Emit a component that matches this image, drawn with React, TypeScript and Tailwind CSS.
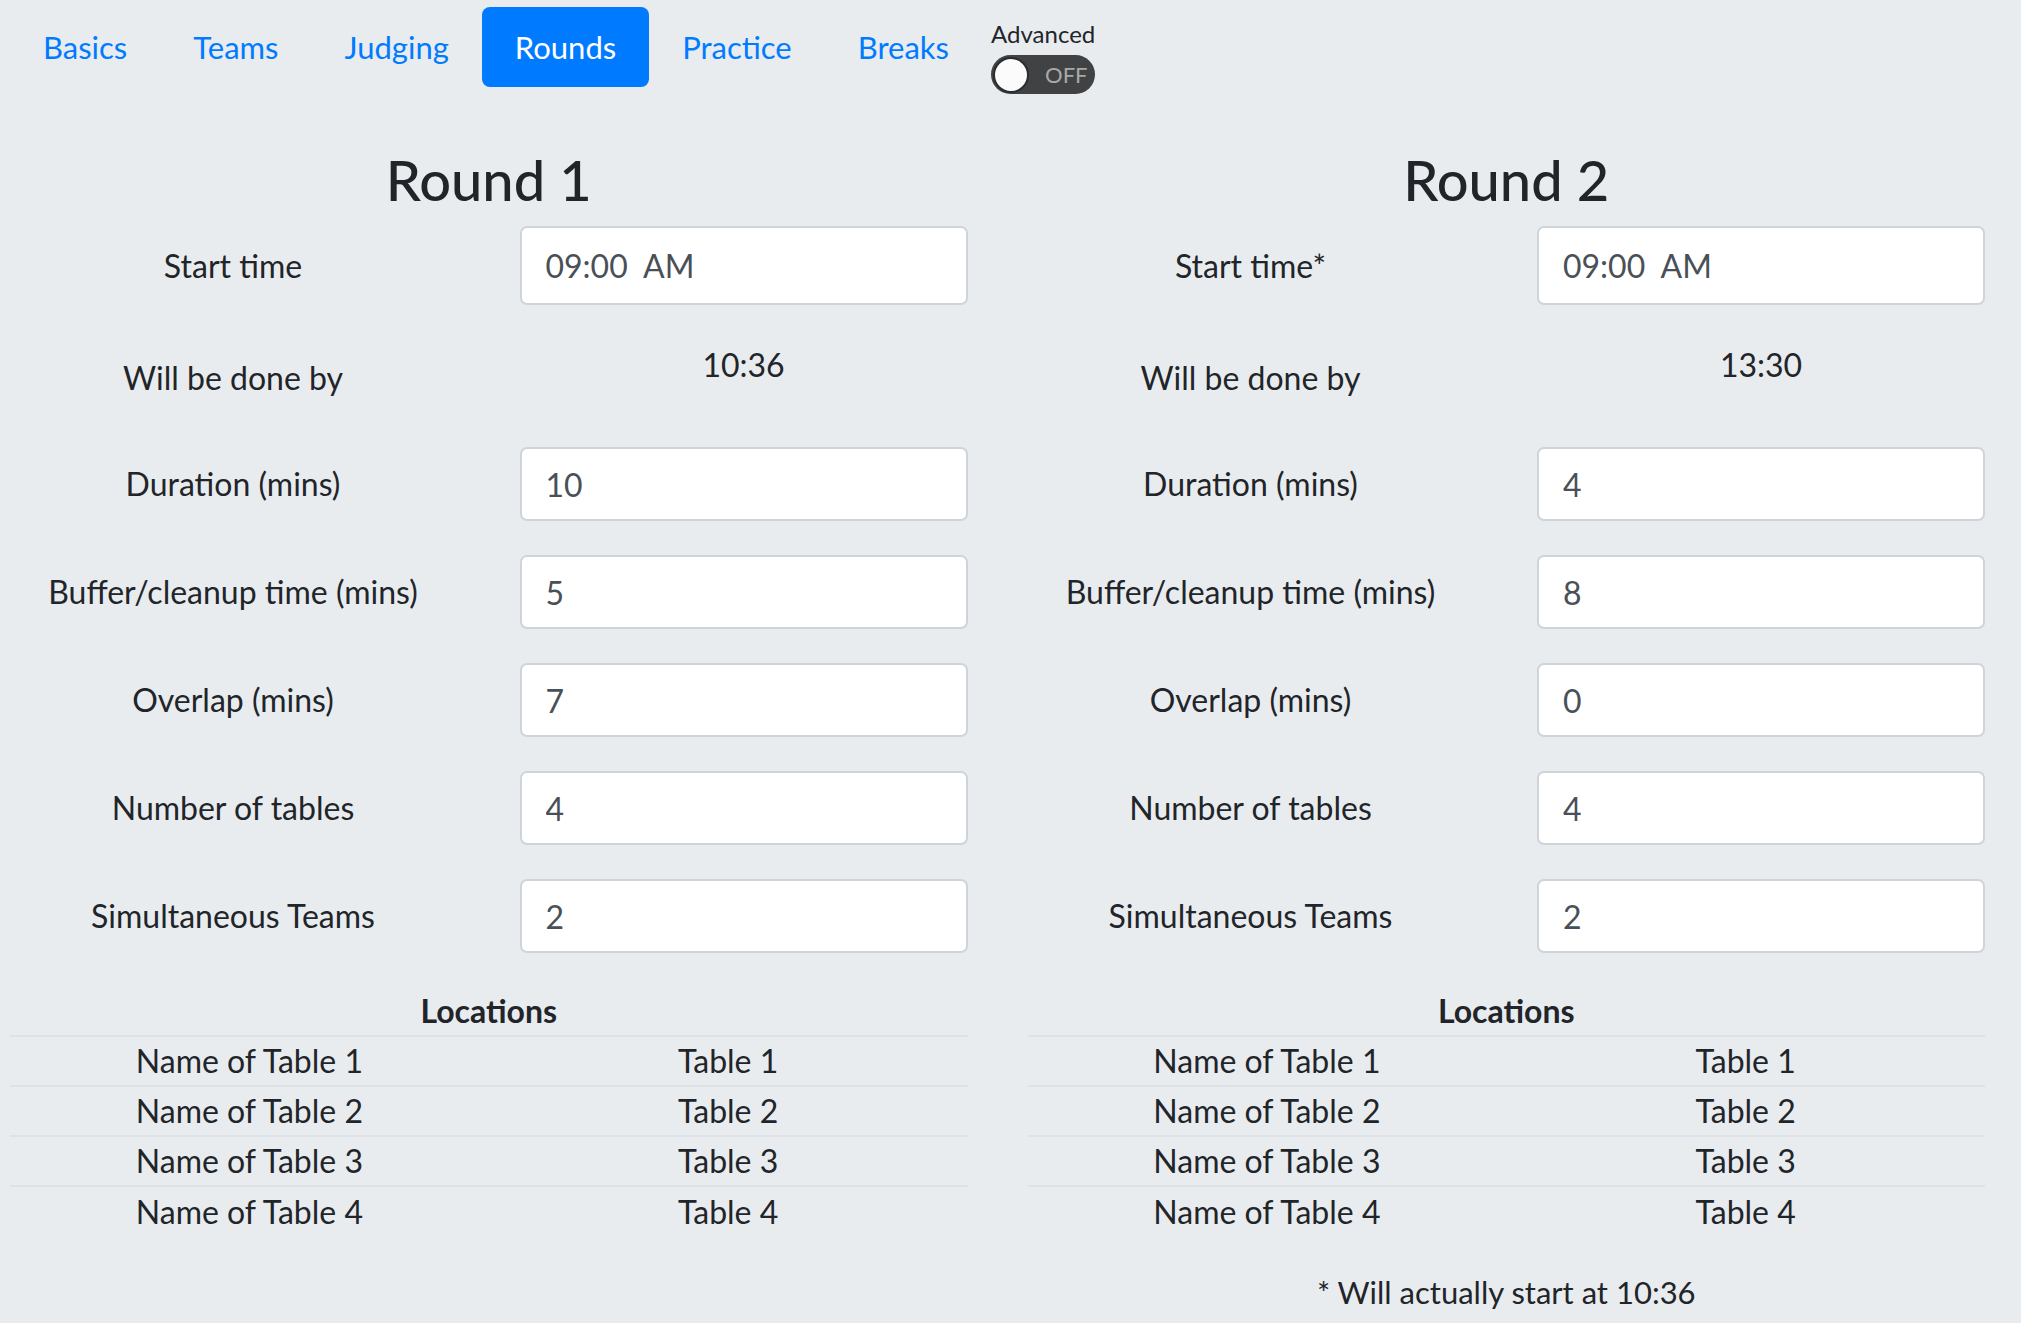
const navItems = ["Basics", "Teams", "Judging", "Rounds", "Practice", "Breaks"];

const rounds = [
  {
    title: "Round 1",
    startLabel: "Start time",
    doneBy: "10:36",
    fields: [
      { label: "Duration (mins)", value: "10" },
      { label: "Buffer/cleanup time (mins)", value: "5" },
      { label: "Overlap (mins)", value: "7" },
      { label: "Number of tables", value: "4" },
      { label: "Simultaneous Teams", value: "2" },
    ],
    note: "",
  },
  {
    title: "Round 2",
    startLabel: "Start time*",
    doneBy: "13:30",
    fields: [
      { label: "Duration (mins)", value: "4" },
      { label: "Buffer/cleanup time (mins)", value: "8" },
      { label: "Overlap (mins)", value: "0" },
      { label: "Number of tables", value: "4" },
      { label: "Simultaneous Teams", value: "2" },
    ],
    note: "* Will actually start at 10:36",
  },
];

const tables = [1, 2, 3, 4];

function Field({ label, value, tall }: { label: string; value: string; tall?: boolean }) {
  return (
    <div className="grid grid-cols-[446px_448px] justify-between items-center mb-[34px]">
      <label className="text-center text-[32px] leading-[74px]">{label}</label>
      <input
        readOnly
        value={value}
        className={
          "w-full rounded-[7px] border-2 border-[#ced4da] bg-white px-[24px] text-[32px] text-[#495057] outline-none " +
          (tall ? "h-[79px]" : "h-[74px]")
        }
      />
    </div>
  );
}

function RoundColumn({ round }: { round: (typeof rounds)[number] }) {
  return (
    <div>
      <h1 className="text-center text-[56px] font-medium leading-[65px] mb-[14px]">{round.title}</h1>

      <Field label={round.startLabel} value="09:00  AM" tall />

      {/* done-by row: value sits at the top, label centred lower */}
      <div className="grid grid-cols-[446px_448px] justify-between items-start h-[74px] mb-[34px]">
        <div className="text-center text-[32px] leading-[74px] mt-[2px]">Will be done by</div>
        <div className="text-center text-[32px] leading-[52px]">{round.doneBy}</div>
      </div>

      {round.fields.map((f) => (
        <Field key={f.label} label={f.label} value={f.value} />
      ))}

      <table className="w-full border-collapse text-[32px]">
        <thead>
          <tr>
            <th colSpan={2} className="h-[47px] font-bold">
              Locations
            </th>
          </tr>
        </thead>
        <tbody>
          {tables.map((n) => (
            <tr key={n} className="border-t-2 border-[#dee2e6]">
              <td className="w-1/2 h-[50px] text-center">Name of Table {n}</td>
              <td className="w-1/2 h-[50px] text-center">Table {n}</td>
            </tr>
          ))}
        </tbody>
      </table>

      {round.note && <p className="mt-[30px] text-center text-[31px] leading-[52px]">{round.note}</p>}
    </div>
  );
}

export default function App() {
  return (
    <div className="min-h-screen bg-[#e9ecef] text-[#212529] font-['Lato',sans-serif]">
      <nav className="flex items-start h-[94px] pl-[10px]">
        {navItems.map((item) => (
          <a
            key={item}
            className={
              "mt-[7px] rounded-[8px] px-[33px] py-[14px] text-[31px] leading-[52px] " +
              (item === "Rounds" ? "bg-[#007bff] text-white" : "text-[#007bff]")
            }
          >
            {item}
          </a>
        ))}
        <div className="ml-[9px] mt-[19px] flex flex-col items-start">
          <span className="text-[24px] leading-[29px]">Advanced</span>
          <div className="mt-[7px] flex h-[39px] w-[104px] items-center rounded-full bg-[#404244] pl-[2px]">
            <div className="h-[36px] w-[36px] rounded-full border-2 border-[#2a2c2e] bg-[#fbfbfb]" />
            <span className="ml-[16px] text-[22px] text-[#a9a9a9]">OFF</span>
          </div>
        </div>
      </nav>

      <div className="mt-[53px] grid grid-cols-2 gap-[60px] pl-[10px] pr-[36px]">
        {rounds.map((r) => (
          <RoundColumn key={r.title} round={r} />
        ))}
      </div>
    </div>
  );
}
